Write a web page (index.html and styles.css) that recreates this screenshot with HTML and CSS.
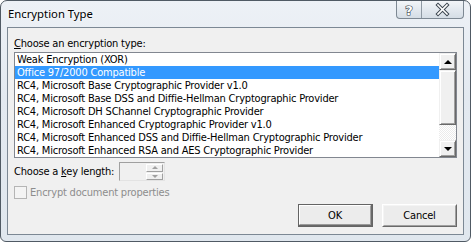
FILE: index.html
```html
<!DOCTYPE html>
<html>
<head>
<meta charset="utf-8">
<title>Encryption Type</title>
<link rel="stylesheet" href="styles.css">
</head>
<body>
<div class="window">
  <div class="titlebar">
    <span class="title">Encryption Type</span>
    <div class="caption-btns">
      <div class="cbtn help">
        <svg width="24" height="17" viewBox="0 0 24 17"><text x="12" y="13.5" text-anchor="middle" class="qmark">?</text></svg>
      </div>
      <div class="cbtn close">
        <svg width="41" height="17" viewBox="0 0 41 17">
          <path d="M16 4 L25 13 M25 4 L16 13" stroke="#3c4650" stroke-width="3.6" stroke-linecap="square" fill="none"/>
          <path d="M16 4 L25 13 M25 4 L16 13" stroke="#ffffff" stroke-width="1.6" stroke-linecap="square" fill="none"/>
        </svg>
      </div>
    </div>
  </div>
  <div class="client">
    <div class="label"><u>C</u>hoose an encryption type:</div>
    <div class="listbox">
      <div class="rows">
        <div class="row">Weak Encryption (XOR)</div>
        <div class="row sel">Office 97/2000 Compatible</div>
        <div class="row">RC4, Microsoft Base Cryptographic Provider v1.0</div>
        <div class="row">RC4, Microsoft Base DSS and Diffie-Hellman Cryptographic Provider</div>
        <div class="row">RC4, Microsoft DH SChannel Cryptographic Provider</div>
        <div class="row">RC4, Microsoft Enhanced Cryptographic Provider v1.0</div>
        <div class="row">RC4, Microsoft Enhanced DSS and Diffie-Hellman Cryptographic Provider</div>
        <div class="row">RC4, Microsoft Enhanced RSA and AES Cryptographic Provider</div>
      </div>
      <div class="vscroll">
        <div class="sbtn"><span class="arrow-up"></span></div>
        <div class="thumb"></div>
        <div class="track"></div>
        <div class="sbtn"><span class="arrow-down"></span></div>
      </div>
    </div>
    <div class="keyrow">
      <span class="keylabel">Choose a <u>k</u>ey length:</span>
      <div class="spin">
        <div class="spin-field"></div>
        <div class="spin-btns">
          <div class="spb"><span class="sarrow-up"></span></div>
          <div class="spb"><span class="sarrow-down"></span></div>
        </div>
      </div>
    </div>
    <div class="checkrow">
      <span class="checkbox"></span>
      <span class="checklabel">Encrypt document properties</span>
    </div>
    <div class="buttons">
      <div class="btn default"><span class="btn-inner">OK</span></div>
      <div class="btn"><span class="btn-inner">Cancel</span></div>
    </div>
  </div>
</div>
</body>
</html>
```

FILE: styles.css
```css
html, body {
  margin: 0;
  padding: 0;
  width: 471px;
  height: 242px;
  overflow: hidden;
  background: #ffffff;
}

.window {
  box-sizing: border-box;
  width: 471px;
  height: 242px;
  border: 1px solid #505a64;
  border-radius: 7px 7px 6px 6px;
  background: linear-gradient(180deg, #edf1f6 0%, #e3e9f0 40%, #e0e7ee 100%);
  padding: 0 6px 6px 6px;
  display: flex;
  flex-direction: column;
}

.titlebar {
  height: 26px;
  display: flex;
  align-items: flex-start;
}

.title {
  padding: 5px 0 0 1px;
  font-family: "Noto Sans", "Open Sans", sans-serif;
  font-size: 11.3px;
  line-height: 16px;
  color: #000;
  text-shadow: 0 0 6px #ffffff, 0 0 3px #ffffff;
}

.caption-btns {
  margin-left: auto;
  display: flex;
  height: 17px;
  border: 1px solid #7d8893;
  border-top: none;
  border-radius: 0 0 4px 4px;
  overflow: hidden;
  background: linear-gradient(180deg, #f2f5f8 0%, #e3e9ef 50%, #d5dde5 100%);
}

.cbtn {
  height: 17px;
}

.cbtn svg {
  display: block;
}

.help {
  width: 24px;
  border-right: 1px solid #8f99a3;
}

.close {
  width: 41px;
}

.qmark {
  font-family: "DejaVu Sans", sans-serif;
  font-size: 13px;
  font-weight: bold;
  fill: #ffffff;
  stroke: #3c4650;
  stroke-width: 1.2px;
  paint-order: stroke;
}

.client {
  flex: 1;
  border: 1px solid #7c8894;
  background: #f0f0f0;
  padding: 0 6px;
  display: flex;
  flex-direction: column;
  font-family: "DejaVu Sans Condensed", "DejaVu Sans", sans-serif;
  font-stretch: condensed;
  font-size: 11px;
  letter-spacing: -0.2px;
  color: #000;
}

.label {
  margin-top: 9px;
  line-height: 13px;
  height: 13px;
}

.listbox {
  margin-top: 2px;
  height: 106px;
  box-sizing: border-box;
  border: 1px solid #828790;
  background: #ffffff;
  display: flex;
}

.rows {
  flex: 1;
  min-width: 0;
  overflow: hidden;
}

.row {
  box-sizing: border-box;
  height: 13px;
  padding: 1px 0 0 2px;
  line-height: 12px;
  white-space: nowrap;
}

.row.sel {
  background: #3399ff;
  color: #ffffff;
}

.vscroll {
  width: 17px;
  display: flex;
  flex-direction: column;
}

.sbtn, .thumb {
  box-sizing: border-box;
  background: #f0f0f0;
  border: 1px solid;
  border-color: #f0f0f0 #696969 #696969 #f0f0f0;
  box-shadow: inset 1px 1px 0 #ffffff, inset -1px -1px 0 #a0a0a0;
}

.sbtn {
  height: 17px;
  display: flex;
  align-items: center;
  justify-content: center;
}

.thumb {
  height: 55px;
}

.track {
  flex: 1;
  background-color: #f6f6f6;
  background-image: repeating-conic-gradient(#ffffff 0 25%, #ebebeb 0 50%);
  background-size: 2px 2px;
}

.arrow-up {
  width: 0;
  height: 0;
  border-left: 4px solid transparent;
  border-right: 4px solid transparent;
  border-bottom: 4px solid #000;
}

.arrow-down {
  width: 0;
  height: 0;
  border-left: 4px solid transparent;
  border-right: 4px solid transparent;
  border-top: 4px solid #000;
}

.keyrow {
  margin-top: 4px;
  display: flex;
  align-items: center;
  height: 19px;
}

.keylabel {
  line-height: 13px;
  margin-right: 5px;
}

.spin {
  box-sizing: border-box;
  width: 46px;
  height: 19px;
  border: 1px solid;
  border-color: #a0a0a0 #e3e3e3 #e3e3e3 #a0a0a0;
  background: #f0f0f0;
  display: flex;
}

.spin-field {
  flex: 1;
}

.spin-btns {
  width: 17px;
  margin: 1px 1px 0 0;
  display: flex;
  flex-direction: column;
  gap: 1px;
}

.spb {
  box-sizing: border-box;
  height: 8px;
  background: #f0f0f0;
  border: 1px solid;
  border-color: #ffffff #a0a0a0 #a0a0a0 #ffffff;
  display: flex;
  align-items: center;
  justify-content: center;
}

.sarrow-up {
  width: 0;
  height: 0;
  border-left: 3px solid transparent;
  border-right: 3px solid transparent;
  border-bottom: 3px solid #a0a0a0;
}

.sarrow-down {
  width: 0;
  height: 0;
  border-left: 3px solid transparent;
  border-right: 3px solid transparent;
  border-top: 3px solid #a0a0a0;
}

.checkrow {
  margin-top: 5px;
  display: flex;
  align-items: center;
  height: 13px;
  color: #8d8d8d;
}

.checkbox {
  box-sizing: border-box;
  width: 13px;
  height: 13px;
  border: 1px solid #b5b5b5;
  background: #f4f4f4;
  margin-right: 3px;
}

.checklabel {
  line-height: 13px;
}

.buttons {
  margin-top: 5px;
  display: flex;
  justify-content: flex-end;
  gap: 9px;
}

.btn {
  box-sizing: border-box;
  width: 75px;
  height: 23px;
  border: 1px solid;
  border-color: #ffffff #696969 #696969 #ffffff;
  background: #ececec;
  display: flex;
}

.btn-inner {
  flex: 1;
  box-sizing: border-box;
  border: 1px solid;
  border-color: #f4f4f4 #a0a0a0 #a0a0a0 #f4f4f4;
  display: flex;
  align-items: center;
  justify-content: center;
  line-height: 13px;
}

.btn.default {
  border: 1px solid #646464;
  box-shadow: inset -1px -1px 0 #696969;
}

.btn.default .btn-inner {
  border-color: #ffffff #a0a0a0 #9a9a9a #ffffff;
  margin: 0 1px 1px 0;
}
```
